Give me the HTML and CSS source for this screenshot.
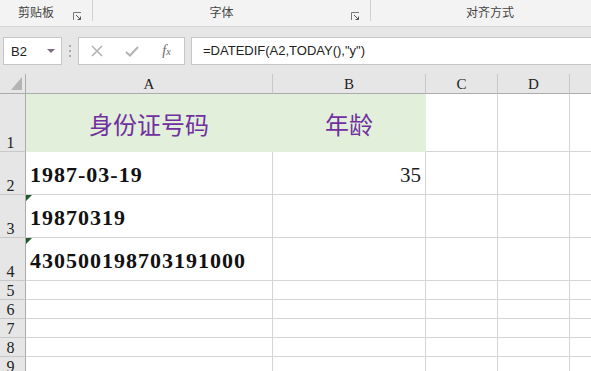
FILE: index.html
```html
<!DOCTYPE html>
<html lang="zh-CN">
<head>
    <meta charset="UTF-8">
    <title>年龄计算</title>
    <link rel="stylesheet" href="styles.css">
</head>
<body>
    <div class="ribbon">
        <div class="group group-clip">
            <span class="group-label">剪贴板</span>
            <span class="launcher">
                <svg width="9" height="9" viewBox="0 0 9 9"><path d="M0.5 8V0.5H8" fill="none" stroke="#777" stroke-width="1"/><path d="M3 3L7.5 7.5M7.5 4.5V7.5H4.5" fill="none" stroke="#555" stroke-width="1"/></svg>
            </span>
        </div>
        <div class="group group-font">
            <span class="group-label">字体</span>
            <span class="launcher">
                <svg width="9" height="9" viewBox="0 0 9 9"><path d="M0.5 8V0.5H8" fill="none" stroke="#777" stroke-width="1"/><path d="M3 3L7.5 7.5M7.5 4.5V7.5H4.5" fill="none" stroke="#555" stroke-width="1"/></svg>
            </span>
        </div>
        <div class="group group-align">
            <span class="group-label">对齐方式</span>
        </div>
    </div>

    <div class="formula-bar">
        <div class="name-box">
            <span>B2</span>
            <span class="name-arrow"></span>
        </div>
        <div class="bar-dots"><i></i><i></i><i></i></div>
        <div class="bar-buttons">
            <span class="bar-btn">
                <svg width="12" height="12" viewBox="0 0 12 12"><path d="M1 1L11 11M11 1L1 11" stroke="#b3b3b3" stroke-width="1.6"/></svg>
            </span>
            <span class="bar-btn">
                <svg width="14" height="11" viewBox="0 0 14 11"><path d="M1 6L5 9.5L13 1" fill="none" stroke="#b3b3b3" stroke-width="2"/></svg>
            </span>
            <span class="bar-btn fx">f<sub>x</sub></span>
        </div>
        <div class="formula-input">=DATEDIF(A2,TODAY(),"y")</div>
    </div>

    <div class="sheet">
        <div class="corner"><span class="corner-mark"></span></div>
        <div class="col-head">A</div>
        <div class="col-head">B</div>
        <div class="col-head">C</div>
        <div class="col-head">D</div>
        <div class="col-head"></div>

        <div class="row-head">1</div>
        <div class="cell title">身份证号码</div>
        <div class="cell title">年龄</div>
        <div class="cell"></div>
        <div class="cell"></div>
        <div class="cell"></div>

        <div class="row-head">2</div>
        <div class="cell data">1987-03-19</div>
        <div class="cell number">35</div>
        <div class="cell"></div>
        <div class="cell"></div>
        <div class="cell"></div>

        <div class="row-head">3</div>
        <div class="cell data"><span class="text-flag"></span>19870319</div>
        <div class="cell"></div>
        <div class="cell"></div>
        <div class="cell"></div>
        <div class="cell"></div>

        <div class="row-head">4</div>
        <div class="cell data"><span class="text-flag"></span>430500198703191000</div>
        <div class="cell"></div>
        <div class="cell"></div>
        <div class="cell"></div>
        <div class="cell"></div>

        <div class="row-head">5</div>
        <div class="cell"></div><div class="cell"></div><div class="cell"></div><div class="cell"></div><div class="cell"></div>
        <div class="row-head">6</div>
        <div class="cell"></div><div class="cell"></div><div class="cell"></div><div class="cell"></div><div class="cell"></div>
        <div class="row-head">7</div>
        <div class="cell"></div><div class="cell"></div><div class="cell"></div><div class="cell"></div><div class="cell"></div>
        <div class="row-head">8</div>
        <div class="cell"></div><div class="cell"></div><div class="cell"></div><div class="cell"></div><div class="cell"></div>
        <div class="row-head">9</div>
        <div class="cell"></div><div class="cell"></div><div class="cell"></div><div class="cell"></div><div class="cell"></div>
    </div>
</body>
</html>
```

FILE: styles.css
```css
* {
    box-sizing: border-box;
}
body {
    margin: 0;
    width: 591px;
    height: 371px;
    overflow: hidden;
    background: #e6e6e6;
    font-family: 'Liberation Sans', 'Noto Sans CJK SC', sans-serif;
    color: #222;
}

/* ribbon group labels */
.ribbon {
    display: flex;
    height: 27px;
    background: #f3f3f3;
    border-bottom: 1px solid #d5d5d5;
}
.group {
    display: flex;
    align-items: flex-end;
    height: 21px;
    border-right: 1px solid #d0d0d0;
    flex-shrink: 0;
}
.group-clip {
    width: 93px;
}
.group-font {
    width: 278px;
}
.group-align {
    width: 258px;
    border-right: none;
    padding-right: 20px;
}
.group-label {
    flex: 1;
    text-align: center;
    font-family: 'Noto Sans CJK SC', sans-serif;
    font-size: 12px;
    line-height: 16px;
    color: #444;
    padding-bottom: 1px;
}
.launcher {
    width: 20px;
    height: 9px;
    display: flex;
    padding-left: 1px;
    margin-bottom: 0;
}

/* formula bar */
.formula-bar {
    display: flex;
    align-items: flex-start;
    height: 47px;
    padding: 10px 0 0 3px;
}
.name-box {
    width: 100px;
    height: 28px;
    background: #fff;
    border: 1px solid #c6c6c6;
    display: flex;
    align-items: center;
    padding: 0 6px 0 7px;
    font-size: 13px;
    color: #222;
}
.name-arrow {
    margin-left: auto;
    width: 0;
    height: 0;
    border-left: 4px solid transparent;
    border-right: 4px solid transparent;
    border-top: 4px solid #7b6e7e;
}
.bar-dots {
    width: 31px;
    height: 28px;
    display: flex;
    flex-direction: column;
    align-items: center;
    justify-content: center;
    gap: 3px;
}
.bar-dots i {
    width: 2px;
    height: 2px;
    background: #aaa;
}
.bar-buttons {
    width: 107px;
    height: 28px;
    background: #fff;
    border: 1px solid #c6c6c6;
    display: flex;
    align-items: center;
}
.bar-btn {
    width: 36px;
    display: flex;
    justify-content: center;
    align-items: center;
}
.fx {
    font-family: 'Liberation Serif', serif;
    font-style: italic;
    font-size: 14px;
    color: #666;
}
.fx sub {
    font-size: 10px;
    vertical-align: -1px;
}
.formula-input {
    margin-left: 6px;
    width: 400px;
    flex-shrink: 0;
    height: 28px;
    background: #fff;
    border: 1px solid #c6c6c6;
    border-right: none;
    padding-left: 11px;
    font-size: 13px;
    line-height: 26px;
    color: #222;
}

/* worksheet grid */
.sheet {
    display: grid;
    grid-template-columns: 26px 247px 153px 72px 72px 60px;
    grid-template-rows: 20px 58px 43px 43px 43px repeat(5, 19px);
    background: #fff;
    font-family: 'Liberation Serif', serif;
}
.corner,
.col-head,
.row-head {
    background: #e6e6e6;
    color: #222;
    font-size: 15px;
}
.corner {
    position: relative;
    border-right: 1px solid #ababab;
    border-bottom: 1px solid #ababab;
}
.corner-mark {
    position: absolute;
    right: 3px;
    bottom: 3px;
    width: 11px;
    height: 13px;
    background: #b4b4b4;
    clip-path: polygon(100% 0, 100% 100%, 0 100%);
}
.col-head {
    border-right: 1px solid #c8c8c8;
    border-bottom: 1px solid #ababab;
    text-align: center;
    line-height: 19px;
    padding-top: 1px;
}
.row-head {
    border-right: 1px solid #ababab;
    border-bottom: 1px solid #c8c8c8;
    display: flex;
    align-items: flex-end;
    justify-content: center;
    padding-right: 4px;
    line-height: 16px;
    font-size: 16px;
}
.cell {
    position: relative;
    border-right: 1px solid #d4d4d4;
    border-bottom: 1px solid #d4d4d4;
    display: flex;
    align-items: center;
}
.title {
    background: #e2efda;
    border-color: #e2efda;
    justify-content: center;
    padding-top: 2px;
    font-family: 'Noto Sans CJK SC', sans-serif;
    font-size: 24px;
    color: #7030a0;
}
.data {
    padding: 4px 0 0 4px;
    font-size: 22px;
    font-weight: bold;
    letter-spacing: 1px;
    color: #111;
}
.number {
    justify-content: flex-end;
    padding: 4px 4px 0 0;
    font-size: 21px;
    color: #222;
}
.text-flag {
    position: absolute;
    left: 0;
    top: 0;
    width: 6px;
    height: 6px;
    background: #1e5a2a;
    clip-path: polygon(0 0, 100% 0, 0 100%);
}
```
